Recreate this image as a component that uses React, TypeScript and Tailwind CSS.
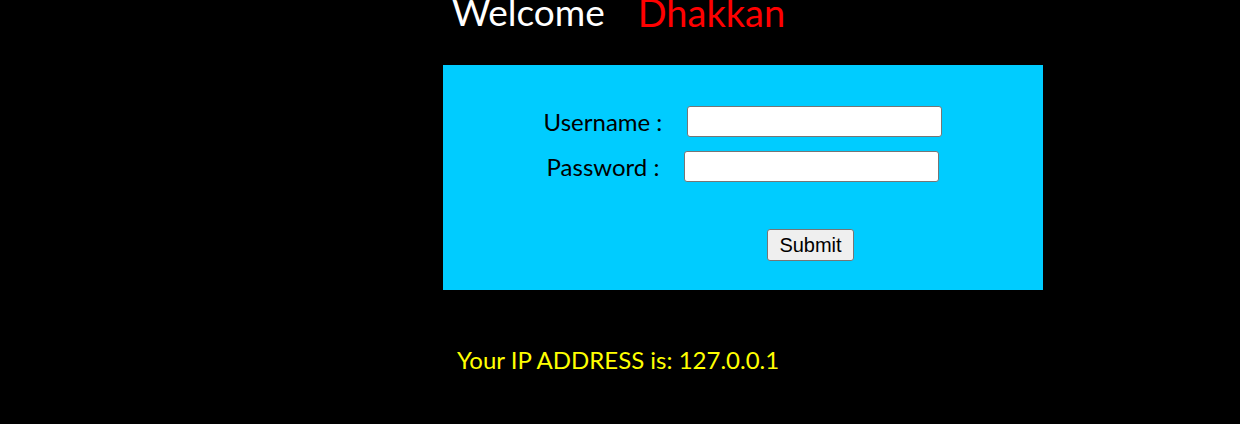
const App = () => {
  return (
    <div className="h-[424px] overflow-hidden bg-black font-['Lato',sans-serif]">
      <div className="mt-[-6px] flex pl-[452px] text-[37px] leading-[36px]">
        <span className="text-white">Welcome</span>
        <span className="ml-[33px] text-[38px] text-[#ff0000]">Dhakkan</span>
      </div>
      <form className="ml-[443px] mt-[35px] flex h-[225px] w-[600px] flex-col bg-[#00ccff] pt-[41px] text-[24px] leading-[30px] text-black">
        <div className="flex items-center justify-center gap-[25px]">
          <label>Username :</label>
          <input
            type="text"
            className="h-[31px] w-[255px] rounded-[3px] border border-[#767676] bg-white"
          />
        </div>
        <div className="mt-[14px] flex items-center justify-center gap-[25px]">
          <label>Password :</label>
          <input
            type="password"
            className="h-[31px] w-[255px] rounded-[3px] border border-[#767676] bg-white"
          />
        </div>
        <div className="mt-[47px] flex pl-[324px]">
          <button
            type="button"
            className="h-[32px] w-[87px] rounded-[3px] border border-[#767676] bg-[#efefef] font-['Liberation_Sans',sans-serif] text-[20px] leading-none"
          >
            Submit
          </button>
        </div>
      </form>
      <p className="mt-[52px] pl-[457px] text-[24px] text-[#ffff00]">
        Your IP ADDRESS is: 127.0.0.1
      </p>
    </div>
  );
};

export default App;
